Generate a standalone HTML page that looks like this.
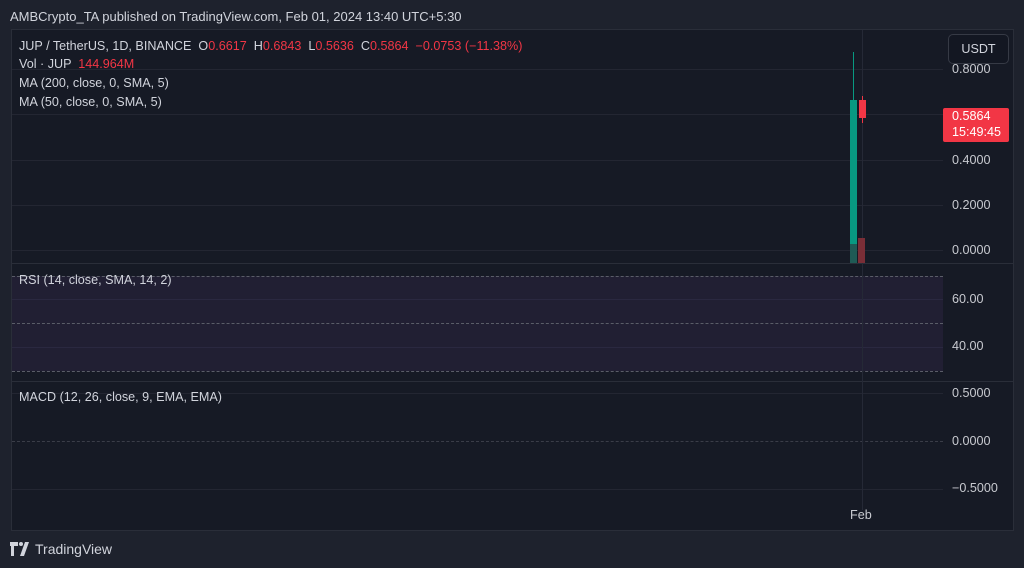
<!DOCTYPE html>
<html><head><style>
body{margin:0;width:1024px;height:568px;background:#1e222d;font-family:"Liberation Sans",sans-serif;overflow:hidden;position:relative;color:#d1d4dc}
.a{position:absolute}
.t{font-size:12.6px;white-space:nowrap}
.r{color:#f23645}
.ax{font-size:12.6px;color:#c8cad0;position:absolute;left:952px}
.g{position:absolute;left:12px;width:931px;height:1px;background:#232632}
.d{position:absolute;left:12px;width:931px;height:0;border-top:1px dashed #5a5d68}
</style></head><body>
<div class="a t" style="left:10px;top:9px;font-size:13px;color:#d1d4dc">AMBCrypto_TA published on TradingView.com, Feb 01, 2024 13:40 UTC+5:30</div>
<div class="a" style="left:11px;top:29px;width:1001px;height:500px;background:#161a25;border:1px solid #2a2e39"></div>
<div class="g" style="top:69px"></div><div class="g" style="top:114px"></div><div class="g" style="top:160px"></div><div class="g" style="top:205px"></div><div class="g" style="top:250px"></div>
<div class="a" style="left:12px;top:263px;width:1001px;height:1px;background:#2a2e39"></div>
<div class="a" style="left:12px;top:381px;width:1001px;height:1px;background:#2a2e39"></div>
<div class="a" style="left:12px;top:276px;width:931px;height:95px;background:#211f33"></div>
<div class="d" style="top:276px"></div><div class="d" style="top:323px"></div><div class="d" style="top:371px"></div>
<div class="g" style="top:299px;background:#2a2840"></div><div class="g" style="top:347px;background:#2a2840"></div>
<div class="g" style="top:393px"></div><div class="d" style="top:441px;border-color:#3a3d48"></div><div class="g" style="top:489px"></div>
<div class="a" style="left:862px;top:30px;width:1px;height:480px;background:#252936"></div>
<div class="a" style="left:853px;top:52px;width:1px;height:48px;background:#089981"></div>
<div class="a" style="left:850px;top:100px;width:7px;height:163px;background:#089981"></div>
<div class="a" style="left:850px;top:244px;width:7px;height:19px;background:#1f5a55"></div>
<div class="a" style="left:862px;top:96px;width:1px;height:27px;background:#f23645"></div>
<div class="a" style="left:859px;top:100px;width:7px;height:18px;background:#f23645"></div>
<div class="a" style="left:858px;top:238px;width:7px;height:25px;background:#7a2e37"></div>
<div class="a t" style="left:19px;top:39px">JUP / TetherUS, 1D, BINANCE &nbsp;O<span class="r">0.6617</span> &nbsp;H<span class="r">0.6843</span> &nbsp;L<span class="r">0.5636</span> &nbsp;C<span class="r">0.5864</span> &nbsp;<span class="r">−0.0753 (−11.38%)</span></div>
<div class="a t" style="left:19px;top:57px">Vol · JUP &nbsp;<span class="r">144.964M</span></div>
<div class="a t" style="left:19px;top:76px">MA (200, close, 0, SMA, 5)</div>
<div class="a t" style="left:19px;top:95px">MA (50, close, 0, SMA, 5)</div>
<div class="a t" style="left:19px;top:273px">RSI (14, close, SMA, 14, 2)</div>
<div class="a t" style="left:19px;top:390px">MACD (12, 26, close, 9, EMA, EMA)</div>
<div class="a t" style="left:948px;top:34px;width:59px;height:28px;border:1px solid #363a45;border-radius:5px;background:#131722;text-align:center;line-height:28px;color:#d1d4dc">USDT</div>
<div class="ax" style="top:62px">0.8000</div>
<div class="a" style="left:943px;top:108px;width:66px;height:34px;background:#f23645;border-radius:2px"></div>
<div class="ax" style="top:109px;color:#fff">0.5864</div>
<div class="ax" style="top:125px;color:#fff">15:49:45</div>
<div class="ax" style="top:153px">0.4000</div>
<div class="ax" style="top:198px">0.2000</div>
<div class="ax" style="top:243px">0.0000</div>
<div class="ax" style="top:292px">60.00</div>
<div class="ax" style="top:339px">40.00</div>
<div class="ax" style="top:386px">0.5000</div>
<div class="ax" style="top:434px">0.0000</div>
<div class="ax" style="top:481px">−0.5000</div>
<div class="a t" style="left:850px;top:508px;color:#c8cad0">Feb</div>
<svg class="a" style="left:10px;top:542px" width="22" height="14" viewBox="0 0 22 14"><path d="M0 0h8v4h-4v10h-3V4H0z" fill="#d1d4dc"/><circle cx="11" cy="2" r="2" fill="#d1d4dc"/><path d="M15 0h4l-5 14h-4z" fill="#d1d4dc"/></svg>
<div class="a t" style="left:35px;top:541px;font-size:14px;color:#d1d4dc">TradingView</div>
</body></html>
